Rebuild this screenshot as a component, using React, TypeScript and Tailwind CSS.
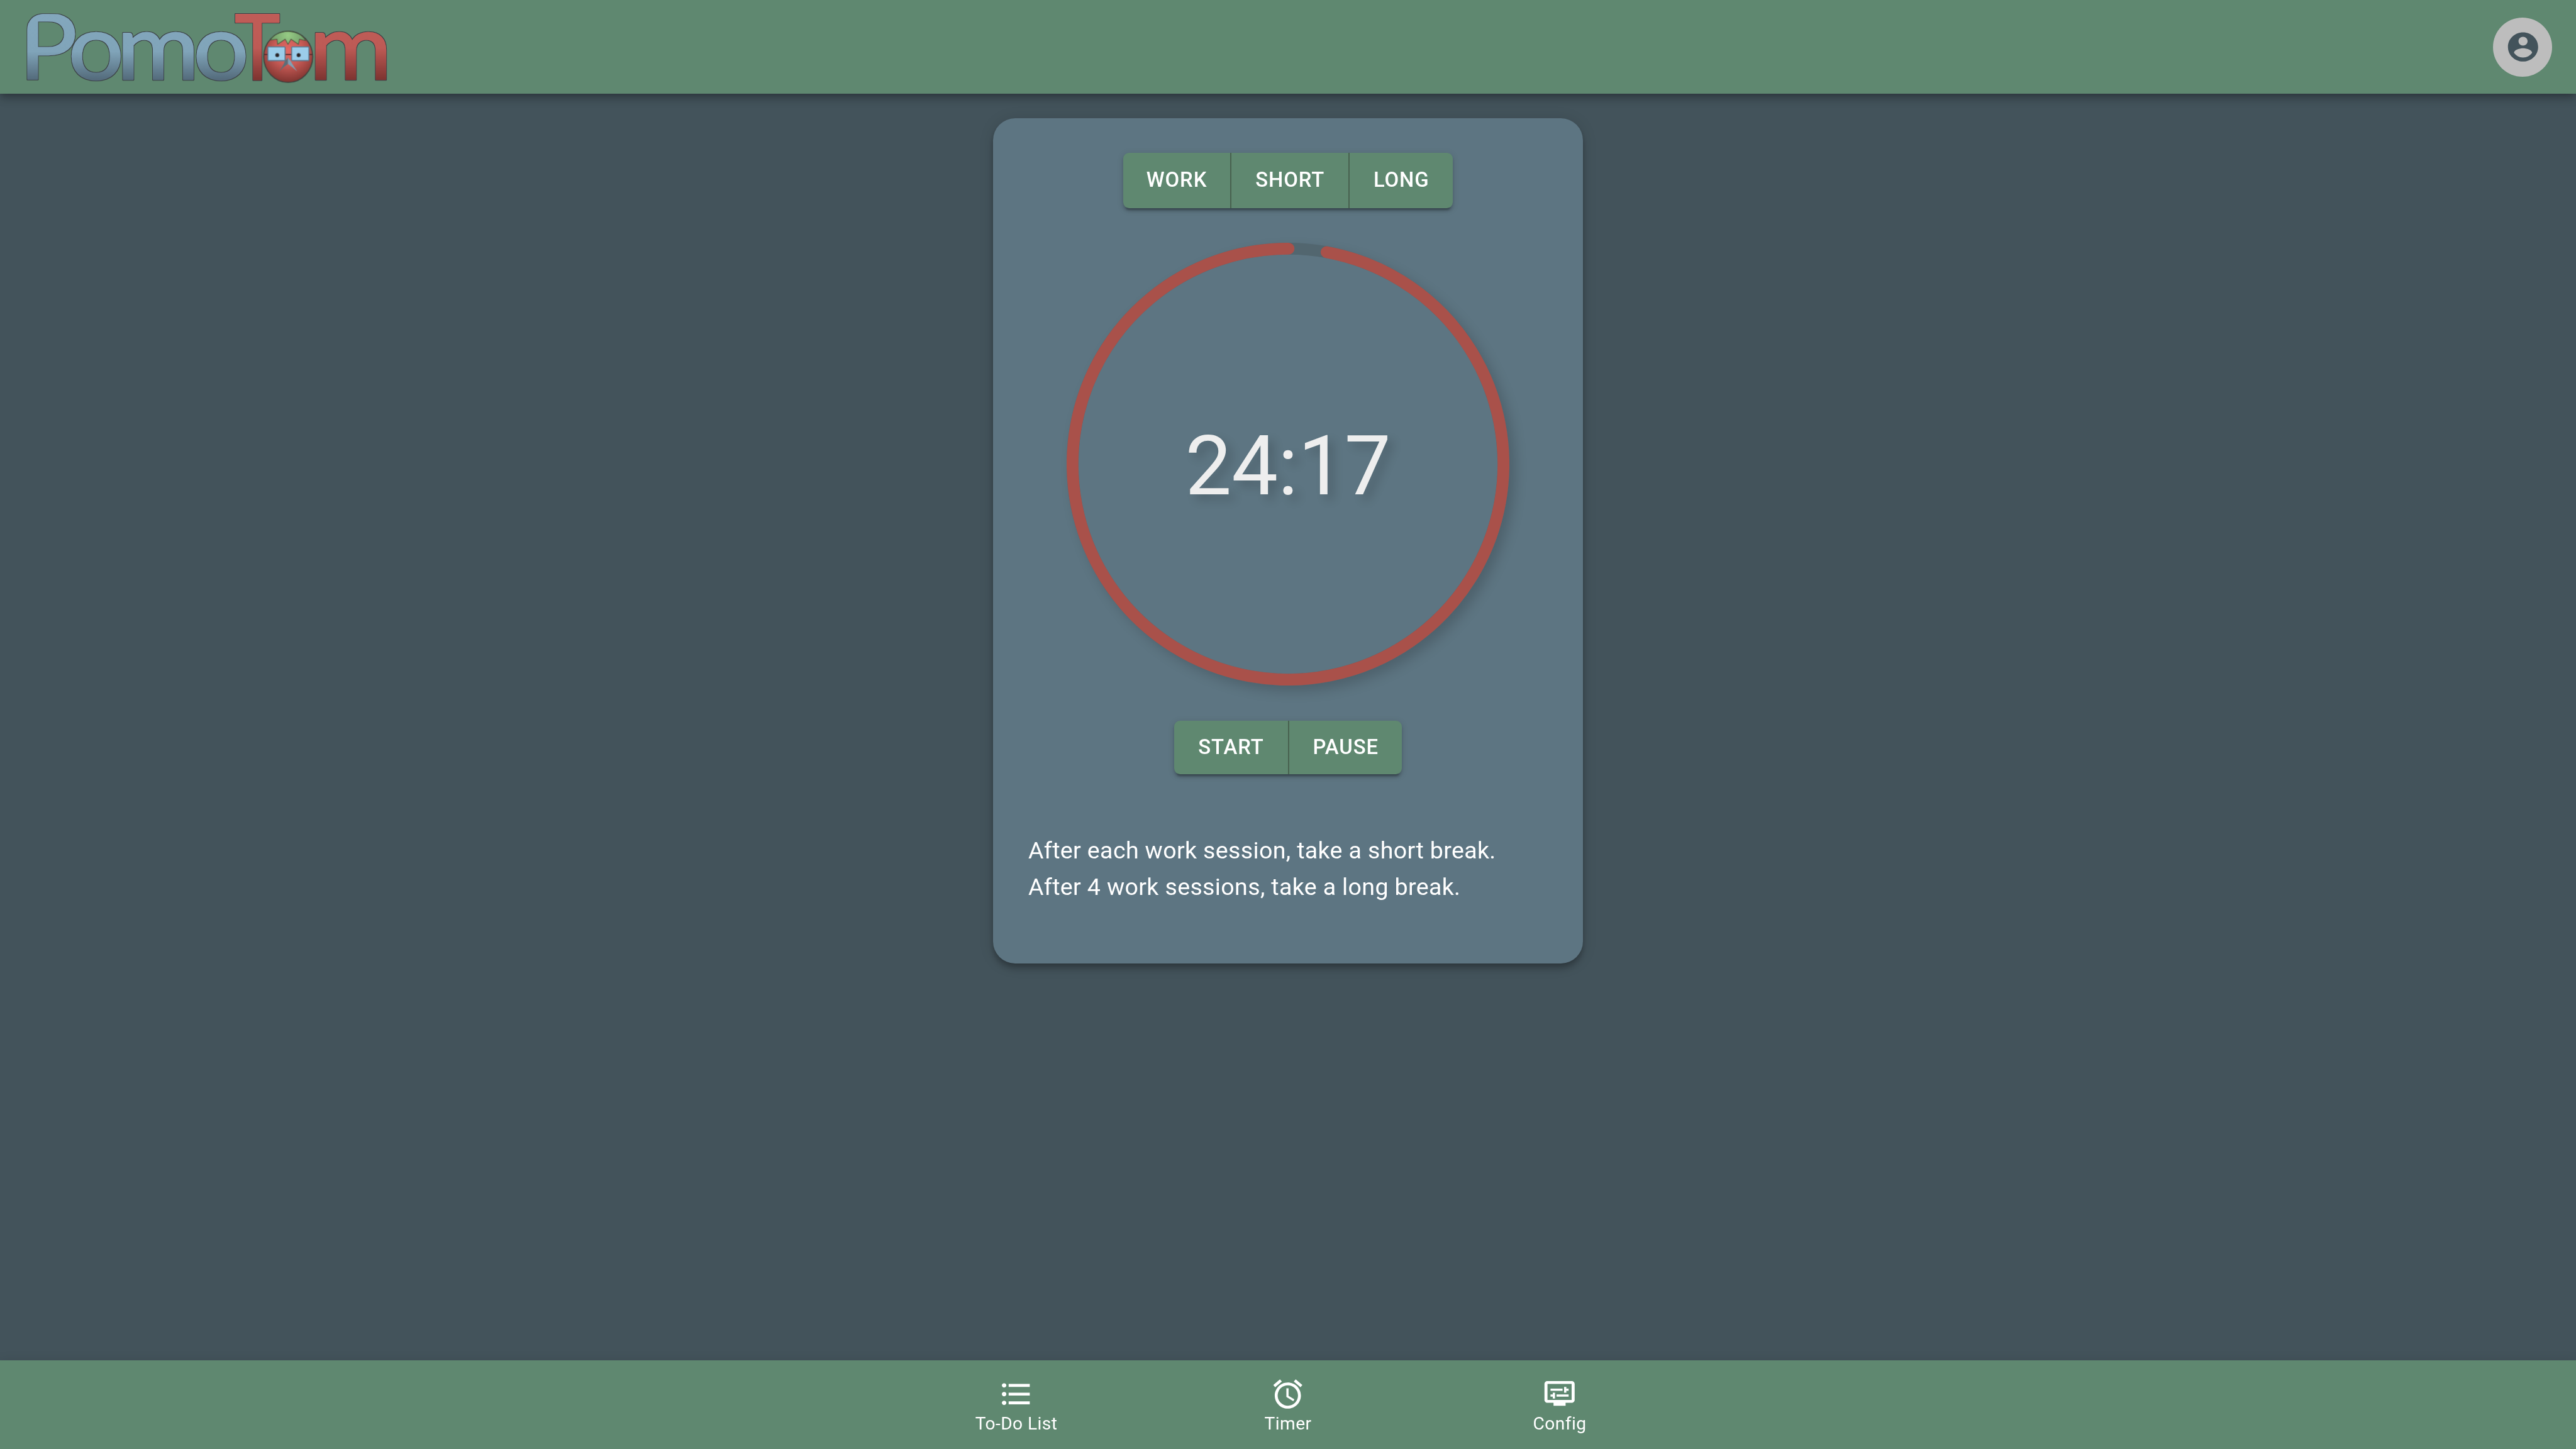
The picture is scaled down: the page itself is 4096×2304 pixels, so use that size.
import type { ReactNode } from 'react';

const ACCOUNT =
  'M12 2C6.48 2 2 6.48 2 12s4.48 10 10 10 10-4.48 10-10S17.52 2 12 2zm0 3c1.66 0 3 1.34 3 3s-1.34 3-3 3-3-1.34-3-3 1.34-3 3-3zm0 14.2c-2.5 0-4.71-1.28-6-3.22.03-1.99 4-3.08 6-3.08 1.99 0 5.97 1.09 6 3.08-1.29 1.94-3.5 3.22-6 3.22z';
const LIST =
  'M4 10.5c-.83 0-1.5.67-1.5 1.5s.67 1.5 1.5 1.5 1.5-.67 1.5-1.5-.67-1.5-1.5-1.5zm0-6c-.83 0-1.5.67-1.5 1.5S3.17 7.5 4 7.5 5.5 6.83 5.5 6 4.83 4.5 4 4.5zm0 12c-.83 0-1.5.68-1.5 1.5s.68 1.5 1.5 1.5 1.5-.68 1.5-1.5-.67-1.5-1.5-1.5zM7 19h14v-2H7v2zm0-6h14v-2H7v2zm0-8v2h14V5H7z';
const ALARM =
  'M22 5.72l-4.6-3.86-1.29 1.53 4.6 3.86L22 5.72zM7.88 3.39L6.6 1.86 2 5.71l1.29 1.53 4.59-3.85zM12.5 8H11v6l4.75 2.85.75-1.23-4-2.37V8zM12 4c-4.97 0-9 4.03-9 9s4.02 9 9 9c4.97 0 9-4.03 9-9s-4.03-9-9-9zm0 16c-3.87 0-7-3.13-7-7s3.13-7 7-7 7 3.13 7 7-3.13 7-7 7z';
const DISPLAY =
  'M20 3H4c-1.1 0-2 .9-2 2v11c0 1.1.9 2 2 2h4v2h8v-2h4c1.1 0 2-.9 2-2V5c0-1.1-.9-2-2-2zm0 13H4V5h16v11zM6 8.25h8v1.5H6zm10.5 1.5H18v-1.5h-1.5V7H15v4h1.5zM10 12.25h8v1.5h-8zM7.5 15H9v-4H7.5v1.25H6v1.5h1.5z';

function Icon({ d, className }: { d: string; className: string }) {
  return (
    <svg viewBox="0 0 24 24" preserveAspectRatio="none" fill="currentColor" className={className}>
      <path d={d} />
    </svg>
  );
}

function Tomato() {
  return (
    <g transform="translate(660 20) scale(0.33333)">
      <ellipse cx="600" cy="448" rx="219" ry="229" fill="url(#skin)" stroke="#3d3f3d" strokeWidth="9" />
      <path
        d="M440 298C470 250 520 226 598 219C676 226 728 250 756 303L700 290L692 336L625 290L598 336L573 290L505 336L500 290Z"
        fill="url(#leaf)"
        stroke="#46583f"
        strokeWidth="6"
        strokeLinejoin="round"
      />
      <path d="M383 427H416M574 427H630M786 427H819" stroke="#552a2c" strokeWidth="9" />
      <rect x="418" y="359" width="154" height="123" rx="6" fill="#9bcdea" stroke="#56798f" strokeWidth="9" />
      <rect x="631" y="359" width="154" height="123" rx="6" fill="#9bcdea" stroke="#56798f" strokeWidth="9" />
      <circle cx="502" cy="433" r="22" fill="url(#pupil)" />
      <circle cx="693" cy="433" r="22" fill="url(#pupil)" />
      <path d="M598 455L598 512Q560 535 520 578Q560 520 570 485Q590 470 598 455Z" fill="#5b6e79" />
      <path d="M598 455L598 512Q640 540 680 578Q640 520 622 485Q606 470 598 455Z" fill="#7ea2b7" />
    </g>
  );
}

function Letter({ char, x, stretch, paint }: { char: string; x: number; stretch: number; paint: string }) {
  return (
    <text transform={`translate(${x} 237) scale(${stretch} 1)`} fill={paint} stroke={paint}>
      {char}
    </text>
  );
}

function Logo() {
  return (
    <svg viewBox="72 0 1090 280" className="h-[149.33px] w-[581.33px] overflow-visible">
      <defs>
        <linearGradient id="blue" gradientUnits="userSpaceOnUse" x1="0" y1="-197" x2="0" y2="9">
          <stop offset="0" stopColor="#83a7bd" />
          <stop offset="0.55" stopColor="#80a4b9" />
          <stop offset="1" stopColor="#4f6575" />
        </linearGradient>
        <linearGradient id="red" gradientUnits="userSpaceOnUse" x1="0" y1="-197" x2="0" y2="9">
          <stop offset="0" stopColor="#c05c58" />
          <stop offset="0.5" stopColor="#bd5a55" />
          <stop offset="1" stopColor="#78302d" />
        </linearGradient>
        <radialGradient id="skin" gradientUnits="userSpaceOnUse" cx="600" cy="390" r="290">
          <stop offset="0" stopColor="#e26863" />
          <stop offset="0.45" stopColor="#c95c57" />
          <stop offset="1" stopColor="#7e332f" />
        </radialGradient>
        <radialGradient id="leaf" gradientUnits="userSpaceOnUse" cx="598" cy="255" r="170">
          <stop offset="0" stopColor="#97cc85" />
          <stop offset="1" stopColor="#6c9867" />
        </radialGradient>
        <radialGradient id="pupil">
          <stop offset="0" stopColor="#1f1a1c" />
          <stop offset="0.6" stopColor="#2c2a2e" />
          <stop offset="1" stopColor="#9bcdea" />
        </radialGradient>
        <clipPath id="shoulder">
          <rect x="82" y="42" width="600" height="600" rx="46" />
        </clipPath>
        <filter id="outline" filterUnits="userSpaceOnUse" x="72" y="0" width="1100" height="280">
          <feMorphology in="SourceAlpha" operator="dilate" radius="2" result="grown" />
          <feFlood floodColor="#3d4346" />
          <feComposite in2="grown" operator="in" />
          <feMerge>
            <feMergeNode />
            <feMergeNode in="SourceGraphic" />
          </feMerge>
        </filter>
      </defs>
      <g fontFamily="Lato, sans-serif" fontSize="270" strokeWidth="4.5" strokeLinejoin="round">
        <g filter="url(#outline)">
          <g clipPath="url(#shoulder)">
            <Letter char="P" x={57.5} stretch={1.07} paint="url(#blue)" />
          </g>
        </g>
        <g filter="url(#outline)">
          <Letter char="o" x={204} stretch={1.085} paint="url(#blue)" />
          <Letter char="m" x={348.5} stretch={1.11} paint="url(#blue)" />
          <Letter char="o" x={576.8} stretch={1.085} paint="url(#blue)" />
          <Letter char="T" x={700.8} stretch={0.845} paint="url(#red)" />
          <Letter char="m" x={923} stretch={1.11} paint="url(#red)" />
        </g>
      </g>
      <Tomato />
    </svg>
  );
}

function ButtonGroup({ children, className }: { children: ReactNode; className: string }) {
  return (
    <div
      className={`flex rounded-[9.4px] bg-[#5f8870] text-[32.85px] font-medium tracking-[0.94px] text-white shadow-[0_7px_2.35px_-4.7px_rgba(0,0,0,0.2),0_4.7px_4.7px_rgba(0,0,0,0.14),0_2.35px_11.7px_rgba(0,0,0,0.12)] ${className}`}
    >
      {children}
    </div>
  );
}

function GroupButton({ label, className }: { label: string; className: string }) {
  return (
    <button className={`flex h-full items-center justify-center border-[#47614f] ${className}`}>{label}</button>
  );
}

function Ring({ remaining }: { remaining: number }) {
  const r = 342.6;
  const length = 2 * Math.PI * r;
  return (
    <svg viewBox="0 0 704 704" className="col-start-1 row-start-1 size-full">
      <circle cx="352" cy="352" r={r} fill="none" stroke="#52666f" strokeWidth="18.8" />
      <circle
        cx="352"
        cy="352"
        r={r}
        fill="none"
        stroke="#a9514a"
        strokeWidth="18.8"
        strokeLinecap="round"
        strokeDasharray={`${length * remaining} ${length}`}
        transform={`rotate(${-90 + 360 * (1 - remaining)} 352 352)`}
      />
    </svg>
  );
}

function NavItem({ d, label, iconClass }: { d: string; label: string; iconClass: string }) {
  return (
    <button className="flex w-[432px] flex-col items-center pt-[25.6px]">
      <Icon d={d} className={iconClass} />
      <span className="text-[28.16px] leading-[40px] tracking-[0.4px]">{label}</span>
    </button>
  );
}

export default function App() {
  return (
    <div className="flex h-[2304px] w-full flex-col overflow-hidden bg-[#43535b] font-['Roboto',sans-serif]">
      <header className="flex h-[149.33px] shrink-0 items-center justify-between bg-[#5f8870] px-[38.4px] shadow-[0_4.7px_9.4px_-2.35px_rgba(0,0,0,0.2),0_9.4px_11.7px_rgba(0,0,0,0.14),0_2.35px_23.5px_rgba(0,0,0,0.12)]">
        <Logo />
        <button className="flex size-[93.87px] items-center justify-center rounded-full bg-[#bdbdbd] pl-[2px] text-[#43535b]">
          <Icon d={ACCOUNT} className="h-[55.47px] w-[57.6px]" />
        </button>
      </header>

      <main className="flex flex-1 flex-col items-center pt-[38.4px]">
        <section className="flex h-[1344px] w-[938.67px] flex-col items-center rounded-[35.2px] bg-[#5d7582] pt-[55.47px] shadow-[0_4.7px_9.4px_-2.35px_rgba(0,0,0,0.2),0_9.4px_11.7px_rgba(0,0,0,0.14),0_2.35px_23.5px_rgba(0,0,0,0.12)]">
          <ButtonGroup className="h-[87.47px] w-[524.8px]">
            <GroupButton label="WORK" className="w-[172.8px] border-r-2" />
            <GroupButton label="SHORT" className="w-[187.73px] border-r-2" />
            <GroupButton label="LONG" className="w-[164.27px]" />
          </ButtonGroup>

          <div className="mt-[55.47px] grid size-[704px] shrink-0 place-items-center rounded-full shadow-[9.4px_9.4px_18.8px_rgba(0,0,0,0.17)]">
            <Ring remaining={1457 / 1500} />
            <span className="col-start-1 row-start-1 pt-[7px] text-[131.4px] leading-none text-[#eeeeee] [text-shadow:9.4px_9.4px_16px_rgba(0,0,0,0.16)]">
              24:17
            </span>
          </div>

          <ButtonGroup className="mt-[55.47px] h-[85.33px] w-[362.67px]">
            <GroupButton label="START" className="w-[183.47px] border-r-2" />
            <GroupButton label="PAUSE" className="w-[179.2px]" />
          </ButtonGroup>

          <p className="mt-[93.3px] w-full px-[56.3px] text-[37.55px] leading-[57.6px] tracking-[0.35px] text-white">
            After each work session, take a short break.
            <br />
            After 4 work sessions, take a long break.
          </p>
        </section>
      </main>

      <nav className="flex h-[140.8px] shrink-0 justify-center bg-[#5f8870] text-white shadow-[0_7px_7px_-4.7px_rgba(0,0,0,0.2),0_7px_9.4px_rgba(0,0,0,0.14),0_2.35px_18.8px_rgba(0,0,0,0.12)]">
        <NavItem d={LIST} label="To-Do List" iconClass="h-[55.47px] w-[57.6px]" />
        <NavItem d={ALARM} label="Timer" iconClass="size-[55.47px]" />
        <NavItem d={DISPLAY} label="Config" iconClass="h-[55.47px] w-[57.6px]" />
      </nav>
    </div>
  );
}
